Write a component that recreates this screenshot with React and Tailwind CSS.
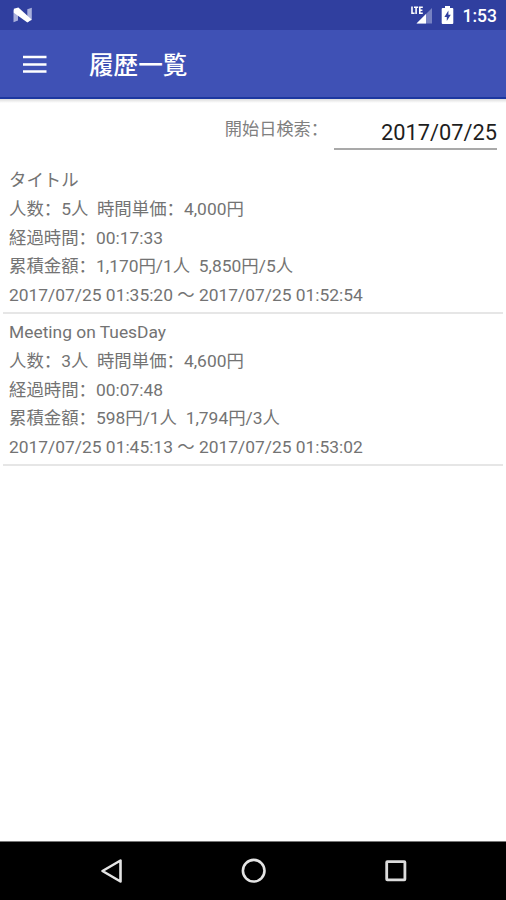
const meetings = [
  {
    title: "タイトル",
    lines: [
      "人数：5人  時間単価：4,000円",
      "経過時間：00:17:33",
      "累積金額：1,170円/1人  5,850円/5人",
      "2017/07/25 01:35:20 ～ 2017/07/25 01:52:54",
    ],
  },
  {
    title: "Meeting on TuesDay",
    lines: [
      "人数：3人  時間単価：4,600円",
      "経過時間：00:07:48",
      "累積金額：598円/1人  1,794円/3人",
      "2017/07/25 01:45:13 ～ 2017/07/25 01:53:02",
    ],
  },
];

function StatusBar() {
  return (
    <div className="flex h-[30px] items-center bg-[#303f9f] pr-[9px] pl-[13px] text-white">
      <svg width="20" height="16" viewBox="0 0 20 16">
        <path d="M0.5 3.2L5 1.2V13.5L0.5 15.2Z" fill="#a9b0dc" />
        <path d="M14.3 2.2L18.8 0.8V13L14.3 15Z" fill="#a9b0dc" />
        <path d="M0.8 1.8L5.4 0.6L18.6 12.4L14.4 15.4L0.8 5.8Z" fill="#fff" />
      </svg>
      <div className="ml-auto flex items-center">
        <svg width="23" height="20" viewBox="0 0 23 20">
          <path d="M22 3V18.5H6.5Z" fill="#7681c2" />
          <path d="M16 9V18.5H6.5Z" fill="#fff" />
          <path d="M2 1.5V8.3H4.6M4 2.2H8.2M6.1 2.2V9M12.8 2.2H9.8V8.3H12.8M9.8 5.2H12.4" fill="none" stroke="#fff" strokeWidth="1.6" />
        </svg>
        <svg className="ml-[8px]" width="13" height="18" viewBox="0 0 13 18">
          <path d="M4 0H9V2H11.3Q12.3 2 12.3 3V17Q12.3 18 11.3 18H1.7Q0.7 18 0.7 17V3Q0.7 2 1.7 2H4Z" fill="#fff" />
          <path d="M7.4 4.5V8.7H9.8L5.8 15V10.9H3.4Z" fill="#303f9f" />
        </svg>
        <span className="ml-[8px] w-[35px] pt-px text-right text-[17.5px] leading-[30px] font-medium whitespace-nowrap">1:53</span>
      </div>
    </div>
  );
}

function AppBar() {
  return (
    <header className="flex h-[69px] items-center border-b-2 border-[#1c37a0] bg-[#3f51b5] pl-[23px] text-white">
      <svg width="24" height="18" viewBox="0 0 24 18">
        <path d="M0 2H23.5M0 9.4H23.5M0 16.4H23.5" stroke="#fff" strokeWidth="2.5" />
      </svg>
      <h1 className="mt-[4px] ml-[42px] text-[24.6px] leading-[36px] font-medium">履歴一覧</h1>
    </header>
  );
}

function NavBar() {
  return (
    <nav className="mt-auto flex h-[59px] items-center border-t border-[#777] bg-black pl-[100px]">
      <svg width="23" height="26" viewBox="0 0 23 26">
        <path d="M20.5 2.5V23.5L2.5 13Z" fill="none" stroke="#e4e4e4" strokeWidth="2.6" strokeLinejoin="round" />
      </svg>
      <svg className="ml-[118px]" width="26" height="26" viewBox="0 0 26 26">
        <circle cx="12.7" cy="12.7" r="10.8" fill="none" stroke="#e4e4e4" strokeWidth="2.6" />
      </svg>
      <svg className="ml-[118px]" width="22" height="22" viewBox="0 0 22 22">
        <rect x="1.7" y="1.7" width="18.2" height="18.2" rx="0.6" fill="none" stroke="#dcdcdc" strokeWidth="2.8" />
      </svg>
    </nav>
  );
}

export default function App() {
  return (
    <div className="flex h-[900px] w-[506px] flex-col overflow-hidden bg-white font-[Roboto,'Noto_Sans_CJK_SC',sans-serif] text-[17.4px] text-[#737373]">
      <StatusBar />
      <AppBar />
      <div className="h-1 bg-linear-to-b from-[#dcdcdc] to-white" />
      <div className="flex h-[47px] justify-end pr-[9px]">
        <label className="mt-[12px] mr-[6px] text-[17.2px] leading-[29px] whitespace-nowrap text-[#808080]">開始日検索：</label>
        <div className="w-[163px] border-b-2 border-[#a9a9a9] pt-[14px] text-right text-[21.8px] leading-[31px] text-[#1e1e1e]">2017/07/25</div>
      </div>
      <main className="mt-[12px] flex flex-col px-[3px]">
        {meetings.map((m) => (
          <article key={m.title} className="h-[152px] border-b-2 border-[#e6e6e6] pt-[4px] pl-[6px] leading-[28.8px] whitespace-pre">
            <h2>{m.title}</h2>
            {m.lines.map((line) => (
              <p key={line}>{line}</p>
            ))}
          </article>
        ))}
      </main>
      <NavBar />
    </div>
  );
}
